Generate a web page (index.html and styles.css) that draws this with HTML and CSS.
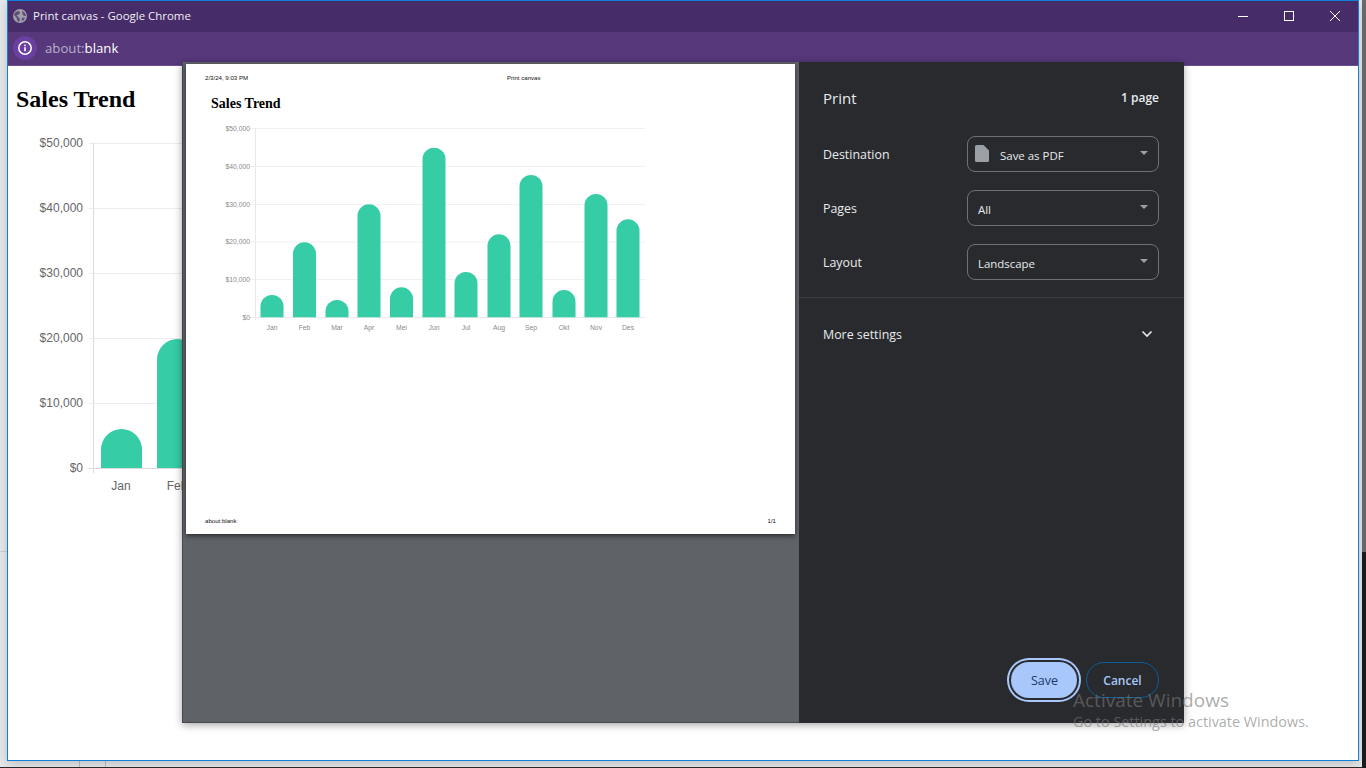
FILE: index.html
```html
<!DOCTYPE html>
<html lang="en">
<head>
<meta charset="utf-8">
<title>Print canvas - Google Chrome</title>
<link rel="stylesheet" href="styles.css">
</head>
<body>
<div class="desktop">
  <div class="backdrop-strip"></div>
  <div class="backdrop-scroll"></div>
  <div class="backdrop-line backdrop-line-a"></div>
  <div class="backdrop-line backdrop-line-b"></div>
  <div class="backdrop-rule"></div>
  <section class="window">
    <header class="titlebar">
      <svg class="globe" width="14" height="14" viewBox="0 0 14 14"><circle cx="7" cy="7" r="7" fill="#a19dac"/><path d="M2 3.500 L5 2 L7 3 L6 5.500 L3.500 6 L5.500 8.500 L7 9.500 L6 13 L4.500 12 L3.500 8.500 L1 6Z M9 2 L12 4 L13 7 L11 7 L9.500 5 Z M9.500 8.500 L12 9 L10 12 L8.500 11 Z" fill="#5d4d74"/></svg>
      <span class="title-text">Print canvas - Google Chrome</span>
      <div class="caption-buttons">
        <svg width="14" height="14" viewBox="0 0 14 14"><path d="M2 7.500H12" stroke="#fff" stroke-width="1"/></svg>
        <svg width="14" height="14" viewBox="0 0 14 14"><rect x="2.500" y="2.500" width="9" height="9" fill="none" stroke="#fff" stroke-width="1"/></svg>
        <svg width="14" height="14" viewBox="0 0 14 14"><path d="M2 2L12 12M12 2L2 12" stroke="#fff" stroke-width="1"/></svg>
      </div>
    </header>
    <div class="addressbar">
      <div class="site-chip">
        <svg width="16" height="16" viewBox="0 0 16 16"><circle cx="8" cy="8" r="6.200" fill="none" stroke="#fff" stroke-width="1.500"/><rect x="7.200" y="7.200" width="1.600" height="4" fill="#fff"/><rect x="7.200" y="4.600" width="1.600" height="1.600" fill="#fff"/></svg>
      </div>
      <span class="url"><span class="url-dim">about:</span>blank</span>
    </div>
    <main class="page">
      <h1 class="page-title">Sales Trend</h1>
      <svg class="big-chart" width="240" height="380" viewBox="0 0 240 380">
        <g class="grid-big">
          <path d="M82 9.500H240M82 74.500H240M82 139.500H240M82 204.500H240M82 269.500H240"/>
          <path class="axis-big" d="M82 334.500H240M86.500 9V339"/>
        </g>
        <g class="tick-big">
          <text x="76" y="13" text-anchor="end">$50,000</text>
          <text x="76" y="78" text-anchor="end">$40,000</text>
          <text x="76" y="143" text-anchor="end">$30,000</text>
          <text x="76" y="208" text-anchor="end">$20,000</text>
          <text x="76" y="273" text-anchor="end">$10,000</text>
          <text x="76" y="338" text-anchor="end">$0</text>
          <text x="114" y="356" text-anchor="middle">Jan</text>
          <text x="170" y="356" text-anchor="middle">Feb</text>
        </g>
        <path class="bar" d="M94 334V315.500a20.500 20.500 0 0 1 41 0V334Z"/>
        <path class="bar" d="M150 334V225.500a20.500 20.500 0 0 1 41 0V334Z"/>
      </svg>
    </main>
  </section>

  <section class="dialog">
    <div class="preview">
      <article class="paper">
        <div class="paper-head">
          <span class="paper-date">2/3/24, 9:03 PM</span>
          <span class="paper-name">Print canvas</span>
        </div>
        <h2 class="paper-title">Sales Trend</h2>
        <svg class="small-chart" width="460" height="220" viewBox="0 0 460 220">
          <path class="grid-small" d="M64 8.500H459M64 46.500H459M64 84.500H459M64 122H459M64 159.500H459"/>
          <path class="axis-small" d="M64 197.500H459M69.500 8V200"/>
          <g class="tick-small">
            <text x="64" y="11" text-anchor="end">$50,000</text>
            <text x="64" y="49" text-anchor="end">$40,000</text>
            <text x="64" y="87" text-anchor="end">$30,000</text>
            <text x="64" y="124" text-anchor="end">$20,000</text>
            <text x="64" y="162" text-anchor="end">$10,000</text>
            <text x="64" y="200" text-anchor="end">$0</text>
            <text x="86" y="210" text-anchor="middle">Jan</text>
            <text x="118.500" y="210" text-anchor="middle">Feb</text>
            <text x="151" y="210" text-anchor="middle">Mar</text>
            <text x="183" y="210" text-anchor="middle">Apr</text>
            <text x="215.500" y="210" text-anchor="middle">Mei</text>
            <text x="248" y="210" text-anchor="middle">Jun</text>
            <text x="280" y="210" text-anchor="middle">Jul</text>
            <text x="313" y="210" text-anchor="middle">Aug</text>
            <text x="345" y="210" text-anchor="middle">Sep</text>
            <text x="378" y="210" text-anchor="middle">Okt</text>
            <text x="410" y="210" text-anchor="middle">Nov</text>
            <text x="442" y="210" text-anchor="middle">Des</text>
          </g>
          <g class="bar">
            <path d="M74.500 197.300V186.500a11.500 11.500 0 0 1 23 0V197.300Z"/>
            <path d="M107 197.300V133.800a11.500 11.500 0 0 1 23 0V197.300Z"/>
            <path d="M139.500 197.300V191.500a11.500 11.500 0 0 1 23 0V197.300Z"/>
            <path d="M171.500 197.300V95.800a11.500 11.500 0 0 1 23 0V197.300Z"/>
            <path d="M204 197.300V178.800a11.500 11.500 0 0 1 23 0V197.300Z"/>
            <path d="M236.500 197.300V39.200a11.500 11.500 0 0 1 23 0V197.300Z"/>
            <path d="M268.500 197.300V163.500a11.500 11.500 0 0 1 23 0V197.300Z"/>
            <path d="M301.500 197.300V125.800a11.500 11.500 0 0 1 23 0V197.300Z"/>
            <path d="M333.500 197.300V66.500a11.500 11.500 0 0 1 23 0V197.300Z"/>
            <path d="M366.500 197.300V181.500a11.500 11.500 0 0 1 23 0V197.300Z"/>
            <path d="M398.500 197.300V85.500a11.500 11.500 0 0 1 23 0V197.300Z"/>
            <path d="M430.500 197.300V110.800a11.500 11.500 0 0 1 23 0V197.300Z"/>
          </g>
        </svg>
        <div class="paper-foot">
          <span>about:blank</span>
          <span>1/1</span>
        </div>
      </article>
    </div>
    <aside class="sidebar">
      <div class="side-head">
        <span class="side-title">Print</span>
        <span class="side-pages">1 page</span>
      </div>
      <div class="settings">
        <div class="setting">
          <span class="setting-label">Destination</span>
          <div class="select select-dest">
            <svg class="doc" width="14" height="17" viewBox="0 0 14 17"><path d="M1.500 0H8.500L14 5.500V15.500A1.500 1.500 0 0 1 12.500 17H1.500A1.500 1.500 0 0 1 0 15.500V1.500A1.500 1.500 0 0 1 1.500 0Z" fill="#9aa0a6"/></svg>
            <span class="select-value">Save as PDF</span>
            <span class="caret"></span>
          </div>
        </div>
        <div class="setting">
          <span class="setting-label">Pages</span>
          <div class="select"><span class="select-value">All</span><span class="caret"></span></div>
        </div>
        <div class="setting">
          <span class="setting-label">Layout</span>
          <div class="select"><span class="select-value">Landscape</span><span class="caret"></span></div>
        </div>
      </div>
      <div class="more">
        <span class="setting-label">More settings</span>
        <svg width="12" height="8" viewBox="0 0 12 8"><path d="M1.500 1.500L6 6L10.500 1.500" fill="none" stroke="#e8eaed" stroke-width="1.600"/></svg>
      </div>
      <div class="actions">
        <button class="btn-save" type="button">Save</button>
        <button class="btn-cancel" type="button">Cancel</button>
      </div>
    </aside>
  </section>

  <div class="activate">
    <div class="activate-title">Activate Windows</div>
    <div class="activate-sub">Go to Settings to activate Windows.</div>
  </div>
</div>
</body>
</html>
```
FILE: styles.css
```css
* { box-sizing: border-box; }
html, body { margin: 0; height: 100%; overflow: hidden; }
body { font-family: "Open Sans", "Noto Sans", sans-serif; }

.desktop { position: relative; width: 1366px; height: 768px; background: #e7e8ea; overflow: hidden; }
.backdrop-strip { position: absolute; left: 0; right: 0; bottom: 0; height: 1px; background: #2b2b2e; }
.backdrop-scroll { position: absolute; right: 0; top: 0; width: 4px; height: 768px; background: linear-gradient(#6b6b6d 552px, #1c1c1e 552px); }
.backdrop-line { position: absolute; top: 760px; width: 1px; height: 7px; background: #bdbec2; }
.backdrop-line-a { left: 79px; }
.backdrop-line-b { left: 105px; }
.backdrop-rule { position: absolute; left: 0; top: 551px; width: 7px; height: 1px; background: #cfd0d3; }

.window {
  position: absolute; left: 7px; top: 0; width: 1352px; height: 761px;
  display: flex; flex-direction: column;
  border: 1px solid #0f7fd8; background: #fff;
  box-shadow: 0 3px 10px rgba(0,0,0,.18);
}
.titlebar { height: 31px; background: #462c69; display: flex; align-items: center; padding: 0 0 2px 5px; color: #fff; flex: none; }
.globe { flex: none; }
.title-text { margin-left: 6px; font-size: 11.450px; color: #f2eff6; }
.caption-buttons { margin-left: auto; display: flex; gap: 32px; padding-right: 16px; }
.addressbar { height: 34px; background: #56387b; border-bottom: 1px solid #6b4c93; display: flex; align-items: center; padding: 0 0 2px 5px; flex: none; }
.site-chip { width: 24px; height: 24px; border-radius: 50%; background: #6a3fa0; display: flex; align-items: center; justify-content: center; }
.url { margin-left: 8px; font-size: 13.200px; color: #fff; }
.url-dim { color: #b9aecb; }

.page { position: relative; flex: 1; padding: 19px 0 0 8px; }
.page-title { margin: 0; font: bold 24px/28px "Liberation Serif", serif; color: #000; }
.big-chart { display: block; margin-top: 21px; margin-left: -9px; }
.grid-big path { stroke: #ededed; fill: none; }
.grid-big .axis-big { stroke: #dcdcdc; }
.tick-big text { font: 12px "Liberation Sans", sans-serif; fill: #666; }
.bar { fill: #36cca6; }

.dialog {
  position: absolute; left: 182px; top: 62px; width: 1002px; height: 661px;
  display: flex; box-shadow: 0 2px 8px rgba(0,0,0,.35);
}
.preview { width: 617px; background: #5f6368; border-left: 1px solid #47484c; border-bottom: 1px solid #47484c; padding: 2px 0 0 3px; flex: none; }
.paper { width: 609px; height: 470px; background: #fff; box-shadow: 0 2px 5px rgba(0,0,0,.55); display: flex; flex-direction: column; padding: 0 19px; }
.paper-head { position: relative; height: 22px; padding-top: 10px; font: 6.100px/7px "Liberation Sans", sans-serif; color: #111; }
.paper-name { position: absolute; left: 302px; top: 10px; }
.paper-title { margin: 10px 0 0 6px; font: bold 14px/16px "Liberation Serif", serif; color: #000; }
.small-chart { display: block; margin-top: 8px; margin-left: -19px; }
.grid-small { stroke: #f0f0f0; fill: none; }
.axis-small { stroke: #e8e8e8; fill: none; }
.tick-small text { font: 6.800px "Liberation Sans", sans-serif; fill: #8a8a8a; }
.paper-foot { margin-top: auto; height: 17px; display: flex; justify-content: space-between; font: 6.100px/7px "Liberation Sans", sans-serif; color: #111; }

.sidebar { flex: 1; background: #292a2d; display: flex; flex-direction: column; color: #e8eaed; position: relative; }
.side-head { display: flex; justify-content: space-between; align-items: center; padding: 22px 25px 0 24px; height: 49px; }
.side-title { font-size: 15px; }
.side-pages { font-size: 12px; font-weight: 600; }
.settings { padding: 25px 25px 17px 24px; display: flex; flex-direction: column; gap: 18px; border-bottom: 1px solid #3f4043; }
.setting { display: flex; align-items: center; justify-content: space-between; height: 36px; }
.setting-label { font-size: 12.400px; color: #e8eaed; }
.select { width: 192px; height: 36px; border: 1px solid #6f7175; border-radius: 8px; display: flex; align-items: center; padding: 2px 10px 0 10px; position: relative; }
.select-dest { padding-left: 7px; }
.doc { flex: none; margin: -3px 11px 0 0; }
.select-value { font-size: 11.450px; color: #e8eaed; }
.caret { margin-left: auto; margin-top: -4px; width: 0; height: 0; border: 4px solid transparent; border-top: 4px solid #9aa0a6; border-bottom: 0; }
.more { height: 72px; display: flex; align-items: center; justify-content: space-between; padding: 0 31px 0 24px; }
.actions { margin-top: auto; display: flex; align-items: center; justify-content: flex-end; gap: 9px; padding: 0 25px 25px 0; }
.btn-save, .btn-cancel { font-family: inherit; font-size: 12px; border-radius: 18px; height: 36px; padding: 0; }
.btn-save { width: 66px; background: #a8c7fa; color: #1c3a6e; border: 0; box-shadow: 0 0 0 2px #292a2d, 0 0 0 4px #a8c7fa; font-size: 12.500px; font-weight: 500; padding-left: 1px; }
.btn-cancel { width: 73px; background: transparent; color: #a8c7fa; border: 1px solid #0b5e96; font-weight: 600; }

.activate { position: absolute; left: 1073px; top: 690px; color: rgba(120,120,120,.62); pointer-events: none; }
.activate-title { font-size: 19px; line-height: 21px; }
.activate-sub { font-size: 14.400px; line-height: 20px; margin-top: 1px; }
```
